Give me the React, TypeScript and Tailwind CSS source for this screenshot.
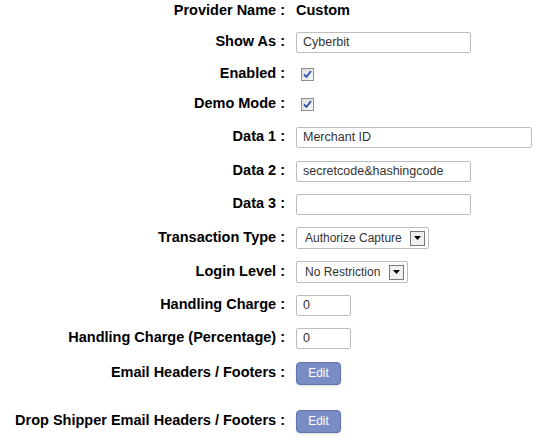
import React from "react";

const font = { fontFamily: '"Liberation Sans", Arial, sans-serif' };

function Row({ label, mt, children }: { label: string; mt: string; children: React.ReactNode }) {
  return (
    <div className={`flex items-center h-[22px] ${mt}`}>
      <div className="w-[286px] shrink-0 text-right font-bold text-[14.5px] text-black pr-[1px] whitespace-nowrap">{label}</div>
      <div className="ml-[10px] flex items-center">{children}</div>
    </div>
  );
}

function TextBox({ w, value }: { w: string; value: string }) {
  return (
    <div className={`${w} h-[21px] border border-[#bdbdbd] rounded-[2px] bg-white flex items-center pl-[6px] text-[12.5px] text-[#333] whitespace-nowrap overflow-hidden`}>
      {value}
    </div>
  );
}

function Check() {
  return (
    <div className="ml-[5px] w-[13px] h-[13px] border border-[#8f8f8f] bg-gradient-to-br from-[#dcdcdc] to-[#f8f8f8] flex items-center justify-center">
      <svg width="9" height="9" viewBox="0 0 9 9">
        <path d="M1 4.5 L3.5 7 L8 1" stroke="#2a4fb0" strokeWidth="1.8" fill="none" />
      </svg>
    </div>
  );
}

function Select({ w, value }: { w: string; value: string }) {
  return (
    <div className={`${w} h-[22px] border border-[#bdbdbd] rounded-[2px] bg-white flex items-center pl-[8px] pr-[3px] text-[12px] text-[#333] whitespace-nowrap`}>
      <span className="flex-1">{value}</span>
      <div className="w-[15px] h-[15px] border border-[#7a7a7a] bg-[#f0f0f0] flex items-center justify-center">
        <svg width="7" height="4" viewBox="0 0 7 4">
          <path d="M0 0 L7 0 L3.5 4 Z" fill="#000" />
        </svg>
      </div>
    </div>
  );
}

function EditButton() {
  return (
    <div className="w-[45px] h-[23px] rounded-[4px] bg-[#7a8cc4] border border-[#6474ad] shadow-[0_1px_2px_rgba(0,0,0,0.15)] flex items-center justify-center text-white text-[12px]">
      Edit
    </div>
  );
}

export default function App() {
  return (
    <div className="w-[536px] h-[443px] bg-white pt-[1px]" style={font}>
      <div className="flex items-center h-[20px]">
        <div className="w-[286px] shrink-0 text-right font-bold text-[14.5px] text-black pr-[1px]">Provider Name :</div>
        <div className="ml-[10px] font-bold text-[14.5px] text-black">Custom</div>
      </div>
      <Row label="Show As :" mt="mt-[10px]"><TextBox w="w-[175px]" value="Cyberbit" /></Row>
      <Row label="Enabled :" mt="mt-[10px]"><Check /></Row>
      <Row label="Demo Mode :" mt="mt-[8px]"><Check /></Row>
      <Row label="Data 1 :" mt="mt-[11px]"><TextBox w="w-[236px]" value="Merchant ID" /></Row>
      <Row label="Data 2 :" mt="mt-[12px]"><TextBox w="w-[175px]" value="secretcode&hashingcode" /></Row>
      <Row label="Data 3 :" mt="mt-[11px]"><TextBox w="w-[175px]" value="" /></Row>
      <Row label="Transaction Type :" mt="mt-[12px]"><Select w="w-[133px]" value="Authorize Capture" /></Row>
      <Row label="Login Level :" mt="mt-[12px]"><Select w="w-[112px]" value="No Restriction" /></Row>
      <Row label="Handling Charge :" mt="mt-[11px]"><TextBox w="w-[55px]" value="0" /></Row>
      <Row label="Handling Charge (Percentage) :" mt="mt-[11px]"><TextBox w="w-[55px]" value="0" /></Row>
      <Row label="Email Headers / Footers :" mt="mt-[13px]"><EditButton /></Row>
      <Row label="Drop Shipper Email Headers / Footers :" mt="mt-[26px]"><EditButton /></Row>
    </div>
  );
}
